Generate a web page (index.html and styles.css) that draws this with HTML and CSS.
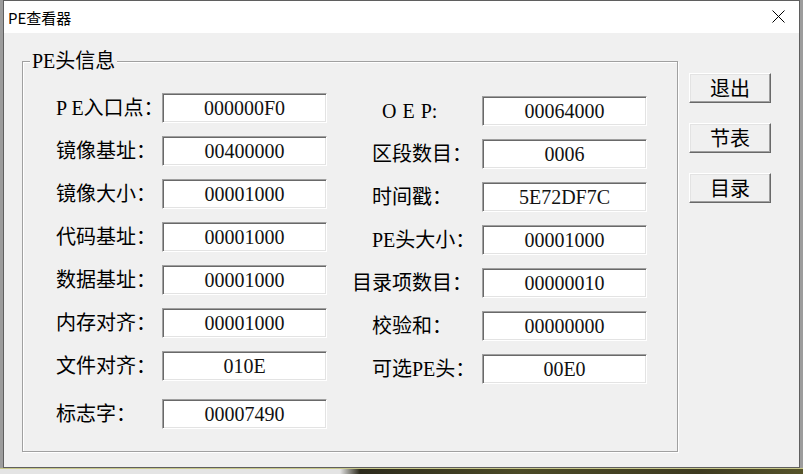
FILE: index.html
```html
<!DOCTYPE html>
<html lang="zh-CN">
<head>
<meta charset="utf-8">
<title>PE查看器</title>
<link rel="stylesheet" href="styles.css">
</head>
<body>
<div class="window">
  <div class="titlebar">
    <span class="title">PE查看器</span>
    <svg class="close" viewBox="0 0 13 13" aria-hidden="true"><path d="M0.5 0.5 L12.5 12.5 M12.5 0.5 L0.5 12.5" stroke="#000" stroke-width="1" fill="none"/></svg>
  </div>
  <div class="client">
    <div class="group">
      <div class="legend">PE头信息</div>
      <div class="cols">
        <div class="col col-left">
          <div class="row"><span class="label">P E入口点：</span><div class="field">000000F0</div></div>
          <div class="row"><span class="label">镜像基址：</span><div class="field">00400000</div></div>
          <div class="row"><span class="label">镜像大小：</span><div class="field">00001000</div></div>
          <div class="row"><span class="label">代码基址：</span><div class="field">00001000</div></div>
          <div class="row"><span class="label">数据基址：</span><div class="field">00001000</div></div>
          <div class="row"><span class="label">内存对齐：</span><div class="field">00001000</div></div>
          <div class="row"><span class="label">文件对齐：</span><div class="field">010E</div></div>
          <div class="row row-last"><span class="label">标志字：</span><div class="field">00007490</div></div>
        </div>
        <div class="col col-right">
          <div class="row"><span class="label label-oep">O E P:</span><div class="field">00064000</div></div>
          <div class="row"><span class="label">区段数目：</span><div class="field">0006</div></div>
          <div class="row"><span class="label">时间戳：</span><div class="field">5E72DF7C</div></div>
          <div class="row"><span class="label">PE头大小：</span><div class="field">00001000</div></div>
          <div class="row"><span class="label label-wide">目录项数目：</span><div class="field">00000010</div></div>
          <div class="row"><span class="label">校验和：</span><div class="field">00000000</div></div>
          <div class="row"><span class="label">可选PE头：</span><div class="field">00E0</div></div>
        </div>
      </div>
    </div>
    <div class="buttons">
      <button class="btn">退出</button>
      <button class="btn">节表</button>
      <button class="btn">目录</button>
    </div>
  </div>
</div>
<div class="desk-bottom"></div>
</body>
</html>
```
FILE: styles.css
```css
html, body {
  margin: 0;
  padding: 0;
}
body {
  width: 803px;
  height: 474px;
  overflow: hidden;
  background: #9c9c9c;
  font-family: "Noto Sans CJK SC", sans-serif;
  color: #000;
}
.window {
  margin-left: 3px;
  width: 797px;
  height: 468px;
  box-sizing: border-box;
  border: 1px solid #5f5f5f;
  background: #f0f0f0;
  display: flex;
  flex-direction: column;
}
.titlebar {
  flex: none;
  height: 32px;
  background: #fff;
  display: flex;
  align-items: center;
  padding-left: 4px;
}
.title {
  font-size: 15px;
  line-height: 20px;
  margin-top: 1px;
}
.close {
  width: 13px;
  height: 13px;
  margin-left: auto;
  margin-right: 14px;
  margin-top: -1px;
}
.client {
  flex: 1;
  display: flex;
  align-items: flex-start;
  padding-left: 18px;
}
.group {
  flex: none;
  margin-top: 28px;
  width: 656px;
  height: 391px;
  box-sizing: border-box;
  border: 1px solid #a0a0a0;
  box-shadow: inset 1px 1px #fff, 1px 1px #fff;
}
.legend {
  width: fit-content;
  margin: -12px 0 0 7px;
  padding: 0 2px;
  background: #f0f0f0;
  font-family: "Liberation Serif", "Noto Sans CJK SC", serif;
  font-size: 20px;
  line-height: 22px;
}
.cols {
  display: flex;
  align-items: flex-start;
  padding-left: 33px;
}
.col {
  display: flex;
  flex-direction: column;
  gap: 13px;
}
.col-left {
  margin-top: 21px;
}
.col-right {
  margin-top: 24px;
  margin-left: 45px;
}
.row {
  display: flex;
  align-items: center;
  height: 30px;
}
.row-last {
  margin-top: 5px;
}
.label {
  width: 106px;
  flex: none;
  white-space: nowrap;
  font-family: "Liberation Serif", "Noto Sans CJK SC", serif;
  font-size: 20px;
  line-height: 24px;
}
.col-right .label {
  width: 110px;
}
.col-right .label-wide {
  width: 130px;
  margin-left: -20px;
}
.col-right .label-oep {
  width: 100px;
  padding-left: 10px;
  word-spacing: 1px;
}
.field {
  flex: none;
  width: 165px;
  height: 30px;
  box-sizing: border-box;
  background: #fff;
  border: 1px solid;
  border-color: #a0a0a0 #fff #fff #a0a0a0;
  box-shadow: inset 1px 1px #696969, inset -1px -1px #e3e3e3;
  text-align: center;
  font-family: "Liberation Serif", serif;
  font-size: 20px;
  line-height: 28px;
  color: #111;
}
.buttons {
  flex: none;
  display: flex;
  flex-direction: column;
  gap: 20px;
  margin-top: 40px;
  margin-left: 11px;
}
.btn {
  width: 82px;
  height: 30px;
  box-sizing: border-box;
  padding: 0;
  background: #f0f0f0;
  border: 1px solid;
  border-color: #fff #696969 #696969 #fff;
  box-shadow: inset -1px -1px #a0a0a0, inset 1px 1px #e3e3e3;
  font-family: "Noto Sans CJK SC", sans-serif;
  font-size: 20px;
  line-height: 26px;
  color: #000;
}
.desk-bottom {
  height: 6px;
  background: linear-gradient(to right, #e4e4e4 0, #e4e4e4 340px, #2c2a1c 360px, #4b4a26 520px, #3d3a20 700px, #55532a 803px);
  box-shadow: inset 0 1px #c8c88a;
}
```
